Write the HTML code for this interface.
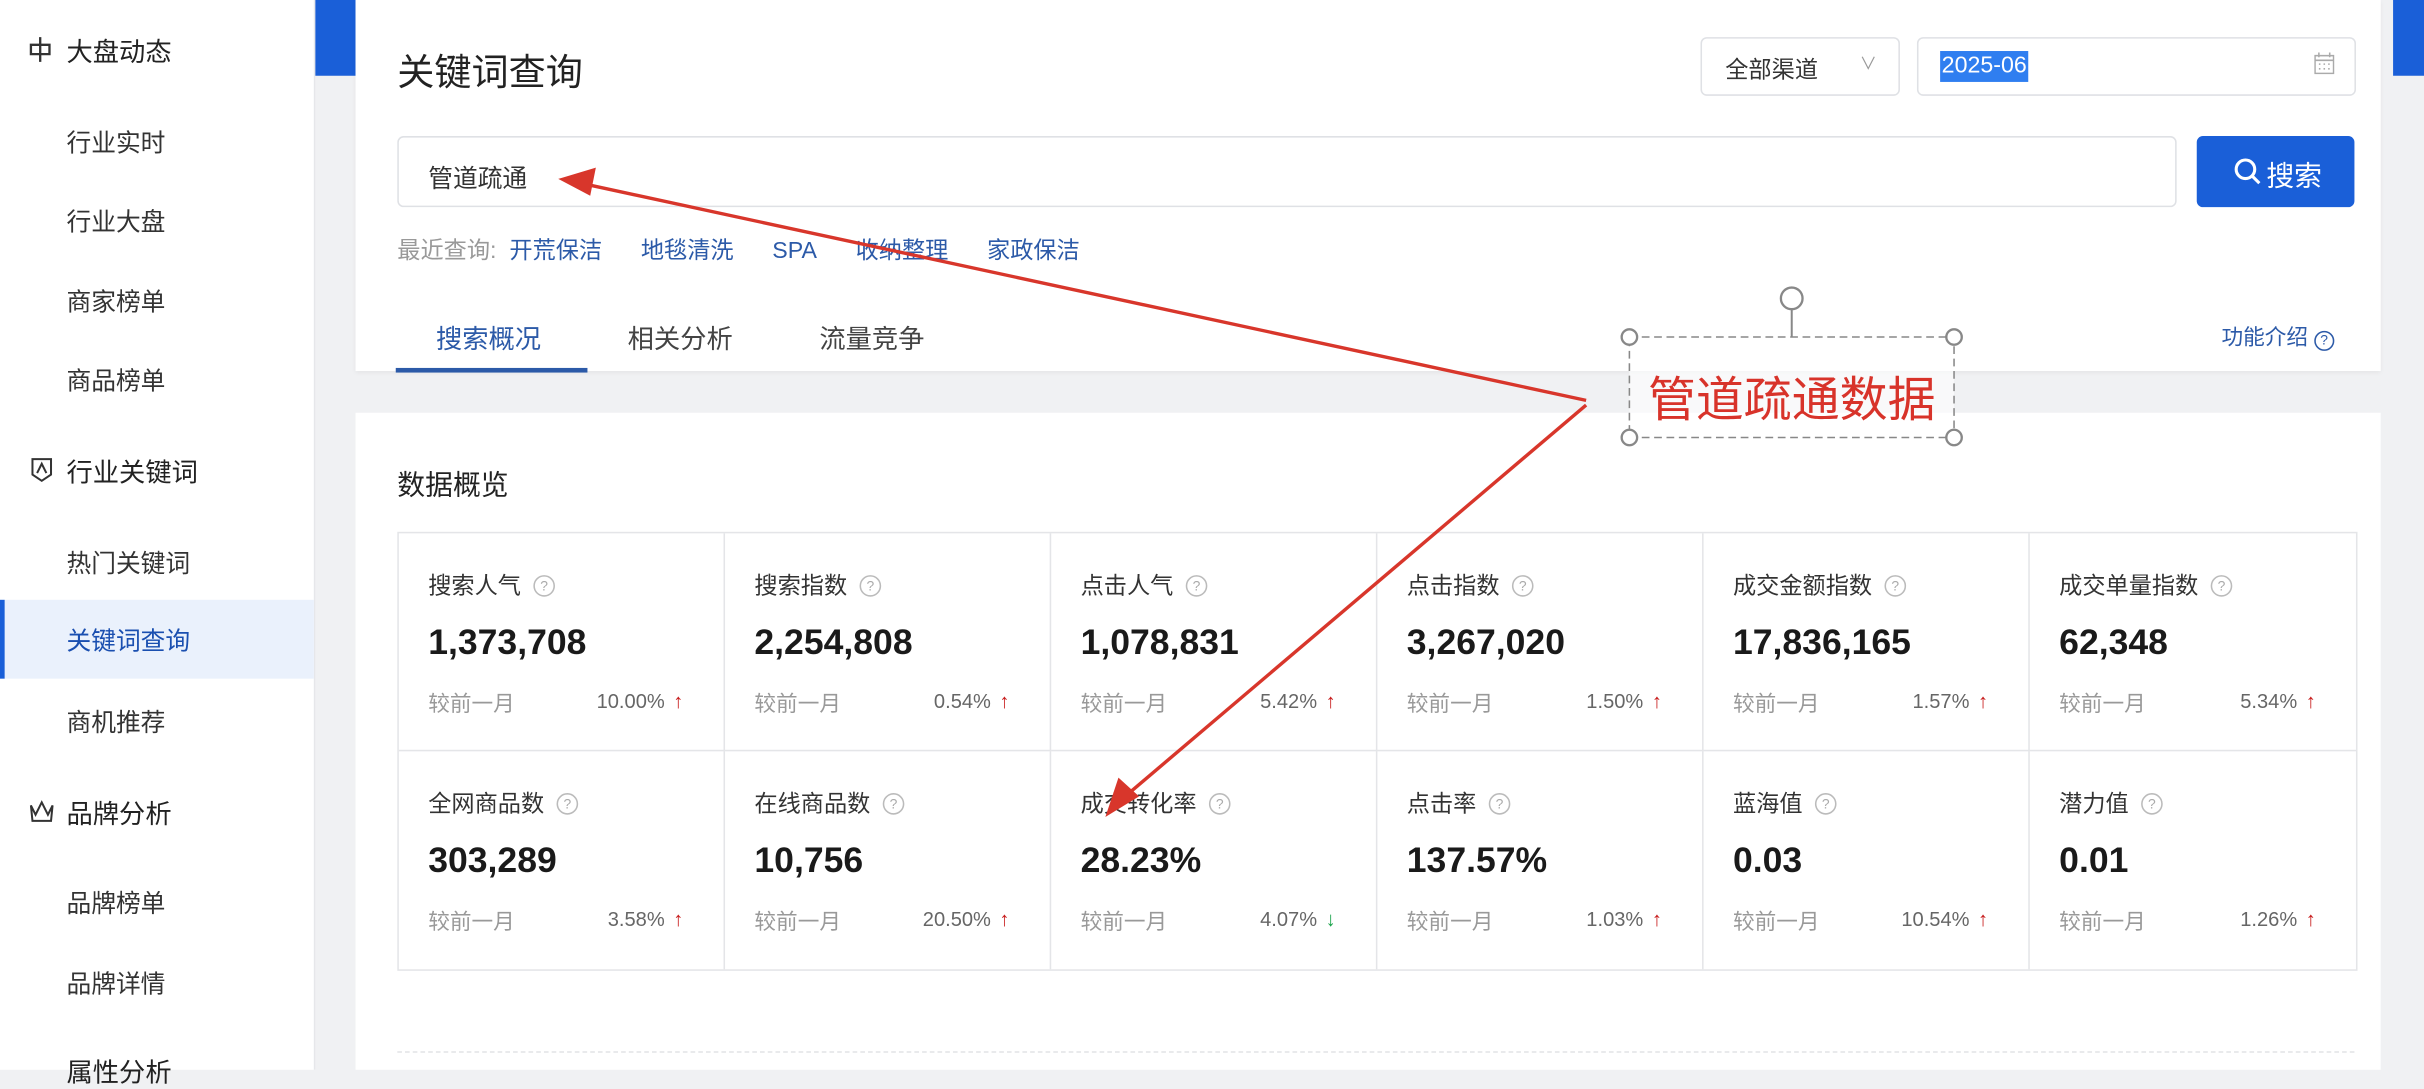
<!DOCTYPE html>
<html><head><meta charset="utf-8"><style>
html,body{margin:0;padding:0;width:2424px;height:1070px;overflow:hidden;background:#f0f1f3}
#w{position:absolute;left:0;top:0;width:1568px;height:692px;transform:scale(1.54592);transform-origin:0 0;font-family:"Liberation Sans","Noto Sans CJK SC",sans-serif;color:#222}
.a{position:absolute;white-space:nowrap}
.side{position:absolute;left:0;top:0;width:203px;height:692px;background:#fff;border-right:1px solid #e6e7ea}
.si{position:absolute;left:43px;font-size:16px;color:#333;transform:translateY(-50%)}
.sh{font-size:17px;color:#222}
.card{position:absolute;background:#fff}
.box{position:absolute;border:1px solid #dfe1e5;border-radius:4px;background:#fff}
.lk{color:#2c5aa8}
.grid{position:absolute;left:257px;top:344px;width:1266px;height:282px;border:1px solid #e4e5e8}
.cell{position:absolute;width:211px;height:141px;border-right:1px solid #e4e5e8;border-bottom:1px solid #e4e5e8;box-sizing:border-box}
.lb{position:absolute;left:19px;top:23px;font-size:15px;color:#333}
.q{display:inline-block;width:12px;height:12px;border:1px solid #bbb;border-radius:50%;font-size:9px;line-height:12px;text-align:center;color:#aaa;margin-left:8px;vertical-align:2px}
.v{position:absolute;left:19px;top:57px;font-size:23px;font-weight:bold;color:#1a1a1a}
.f{position:absolute;left:19px;top:100px;font-size:14px;color:#999}
.p{position:absolute;right:38px;top:101px;font-size:13px;color:#666}
.ar{position:absolute;right:26px;top:101px;font-size:13px;font-weight:bold}
</style></head><body><div id="w">
<div class="side">
<svg class="a" style="left:18px;top:23px" width="16" height="18" viewBox="0 0 16 18"><path d="M8 1V17M2 6H14V12H2Z" fill="none" stroke="#333" stroke-width="1.5"/></svg>
<div class="si sh" style="top:32px">大盘动态</div>
<div class="si" style="top:91px">行业实时</div>
<div class="si" style="top:142px">行业大盘</div>
<div class="si" style="top:194px">商家榜单</div>
<div class="si" style="top:245px">商品榜单</div>
<svg class="a" style="left:20px;top:296px" width="14" height="16" viewBox="0 0 14 16"><path d="M1 1H13V11L7 15L1 11Z M4 10L7 4L10 10" fill="none" stroke="#333" stroke-width="1.3"/></svg>
<div class="si sh" style="top:304px">行业关键词</div>
<div class="si" style="top:363px">热门关键词</div>
<div class="a" style="left:0;top:388px;width:203px;height:51px;background:#eaf1fc;border-left:3px solid #1a5fd8;box-sizing:border-box"></div>
<div class="si" style="top:413px;color:#1a4fb0">关键词查询</div>
<div class="si" style="top:466px">商机推荐</div>
<svg class="a" style="left:18px;top:517px" width="18" height="16" viewBox="0 0 18 16"><path d="M2 4L5 10L9 2L13 10L16 4L15 14H3Z" fill="none" stroke="#333" stroke-width="1.3"/></svg>
<div class="si sh" style="top:525px">品牌分析</div>
<div class="si" style="top:583px">品牌榜单</div>
<div class="si" style="top:635px">品牌详情</div>
<div class="si sh" style="top:692px">属性分析</div>
</div>
<div class="a" style="left:204px;top:0;width:26px;height:49px;background:#1a5fd8"></div>
<div class="a" style="left:1548px;top:0;width:20px;height:49px;background:#1a5fd8"></div>
<div class="card" style="left:230px;top:0;width:1310px;height:240px;box-shadow:0 1px 3px rgba(0,0,0,.06)"></div>
<div class="a" style="left:257px;top:27px;font-size:24px;color:#222">关键词查询</div>
<div class="box" style="left:1100px;top:24px;width:127px;height:36px"></div>
<div class="a" style="left:1116px;top:34px;font-size:15px;color:#333">全部渠道</div>
<div class="a" style="left:1203px;top:33px;font-size:11px;color:#999">∨</div>
<div class="box" style="left:1240px;top:24px;width:282px;height:36px"></div>
<div class="a" style="left:1255px;top:33px;height:20px;padding:0 1px;background:#2f7ef0;color:#fff;font-size:15px;line-height:20px">2025-06</div>
<svg class="a" style="left:1497px;top:34px" width="13" height="14" viewBox="0 0 13 14"><rect x="0.5" y="2" width="12" height="11.5" fill="none" stroke="#aaa"/><path d="M3 0V3M10 0V3M0.5 5H12.5M3 7.5H4M6 7.5H7M9 7.5H10M3 10.5H4M6 10.5H7M9 10.5H10" stroke="#aaa"/></svg>
<div class="box" style="left:257px;top:88px;width:1149px;height:44px"></div>
<div class="a" style="left:277px;top:102px;font-size:16px;color:#333">管道疏通</div>
<div class="a" style="left:1421px;top:88px;width:102px;height:46px;background:#1a5fd8;border-radius:4px"></div>
<svg class="a" style="left:1445px;top:102px" width="18" height="18" viewBox="0 0 18 18"><circle cx="7.5" cy="7.5" r="6" fill="none" stroke="#fff" stroke-width="2"/><path d="M12 12L16.5 16.5" stroke="#fff" stroke-width="2"/></svg>
<div class="a" style="left:1466px;top:100px;font-size:18px;color:#fff">搜索</div>
<div class="a" style="left:257px;top:151px;font-size:15px;color:#999">最近查询:&nbsp;&nbsp;<span class="lk">开荒保洁</span><span class="lk" style="margin-left:25px">地毯清洗</span><span class="lk" style="margin-left:25px">SPA</span><span class="lk" style="margin-left:25px">收纳整理</span><span class="lk" style="margin-left:25px">家政保洁</span></div>
<div class="a" style="left:282px;top:205px;font-size:17px;color:#2c5aa8">搜索概况</div>
<div class="a" style="left:406px;top:205px;font-size:17px;color:#444">相关分析</div>
<div class="a" style="left:530px;top:205px;font-size:17px;color:#444">流量竞争</div>
<div class="a" style="left:256px;top:238px;width:124px;height:3px;background:#2c5aa8"></div>
<div class="a" style="left:1437px;top:208px;font-size:14px;color:#2c5aa8">功能介绍 <span style="display:inline-block;width:11px;height:11px;border:1px solid #2c5aa8;border-radius:50%;font-size:9px;line-height:11px;text-align:center">?</span></div>
<div class="card" style="left:230px;top:267px;width:1310px;height:425px"></div>
<div class="a" style="left:257px;top:300px;font-size:18px;color:#222">数据概览</div>
<div class="grid">
<div class="cell" style="left:0;top:0"><div class="lb">搜索人气<span class="q">?</span></div><div class="v">1,373,708</div><div class="f">较前一月</div><div class="p">10.00%</div><div class="ar" style="color:#c81e1e">↑</div></div>
<div class="cell" style="left:211px;top:0"><div class="lb">搜索指数<span class="q">?</span></div><div class="v">2,254,808</div><div class="f">较前一月</div><div class="p">0.54%</div><div class="ar" style="color:#c81e1e">↑</div></div>
<div class="cell" style="left:422px;top:0"><div class="lb">点击人气<span class="q">?</span></div><div class="v">1,078,831</div><div class="f">较前一月</div><div class="p">5.42%</div><div class="ar" style="color:#c81e1e">↑</div></div>
<div class="cell" style="left:633px;top:0"><div class="lb">点击指数<span class="q">?</span></div><div class="v">3,267,020</div><div class="f">较前一月</div><div class="p">1.50%</div><div class="ar" style="color:#c81e1e">↑</div></div>
<div class="cell" style="left:844px;top:0"><div class="lb">成交金额指数<span class="q">?</span></div><div class="v">17,836,165</div><div class="f">较前一月</div><div class="p">1.57%</div><div class="ar" style="color:#c81e1e">↑</div></div>
<div class="cell" style="left:1055px;top:0;border-right:0"><div class="lb">成交单量指数<span class="q">?</span></div><div class="v">62,348</div><div class="f">较前一月</div><div class="p">5.34%</div><div class="ar" style="color:#c81e1e">↑</div></div>
<div class="cell" style="left:0;top:141px;border-bottom:0"><div class="lb">全网商品数<span class="q">?</span></div><div class="v">303,289</div><div class="f">较前一月</div><div class="p">3.58%</div><div class="ar" style="color:#c81e1e">↑</div></div>
<div class="cell" style="left:211px;top:141px;border-bottom:0"><div class="lb">在线商品数<span class="q">?</span></div><div class="v">10,756</div><div class="f">较前一月</div><div class="p">20.50%</div><div class="ar" style="color:#c81e1e">↑</div></div>
<div class="cell" style="left:422px;top:141px;border-bottom:0"><div class="lb">成交转化率<span class="q">?</span></div><div class="v">28.23%</div><div class="f">较前一月</div><div class="p">4.07%</div><div class="ar" style="color:#1aa34a">↓</div></div>
<div class="cell" style="left:633px;top:141px;border-bottom:0"><div class="lb">点击率<span class="q">?</span></div><div class="v">137.57%</div><div class="f">较前一月</div><div class="p">1.03%</div><div class="ar" style="color:#c81e1e">↑</div></div>
<div class="cell" style="left:844px;top:141px;border-bottom:0"><div class="lb">蓝海值<span class="q">?</span></div><div class="v">0.03</div><div class="f">较前一月</div><div class="p">10.54%</div><div class="ar" style="color:#c81e1e">↑</div></div>
<div class="cell" style="left:1055px;top:141px;border:0"><div class="lb">潜力值<span class="q">?</span></div><div class="v">0.01</div><div class="f">较前一月</div><div class="p">1.26%</div><div class="ar" style="color:#c81e1e">↑</div></div>
</div>
<div class="a" style="left:257px;top:680px;width:1266px;border-top:1px dashed #e2e3e6"></div>
<svg class="a" style="left:0;top:0" width="1568" height="692" viewBox="0 0 1568 692">
<g stroke="#d8362b" stroke-width="2.2" fill="#d8362b">
<line x1="1026" y1="259" x2="378" y2="119"/><path d="M364 116L384 110L381 125Z"/>
<line x1="1026" y1="262" x2="728" y2="515"/><path d="M717 526L724 505L735 515Z"/>
</g>
<rect x="1054" y="218" width="210" height="65" fill="rgba(255,255,255,.6)" stroke="#888" stroke-dasharray="5 3"/>
<line x1="1159" y1="200" x2="1159" y2="218" stroke="#888" stroke-width="1.3"/>
<circle cx="1159" cy="193" r="7" fill="#fff" stroke="#888" stroke-width="1.5"/>
<g fill="#fff" stroke="#888" stroke-width="1.5"><circle cx="1054" cy="218" r="5"/><circle cx="1264" cy="218" r="5"/><circle cx="1054" cy="283" r="5"/><circle cx="1264" cy="283" r="5"/></g>
</svg>
<div class="a" style="left:1066px;top:233px;font-size:31px;color:#d8332a">管道疏通数据</div>
</div></body></html>
